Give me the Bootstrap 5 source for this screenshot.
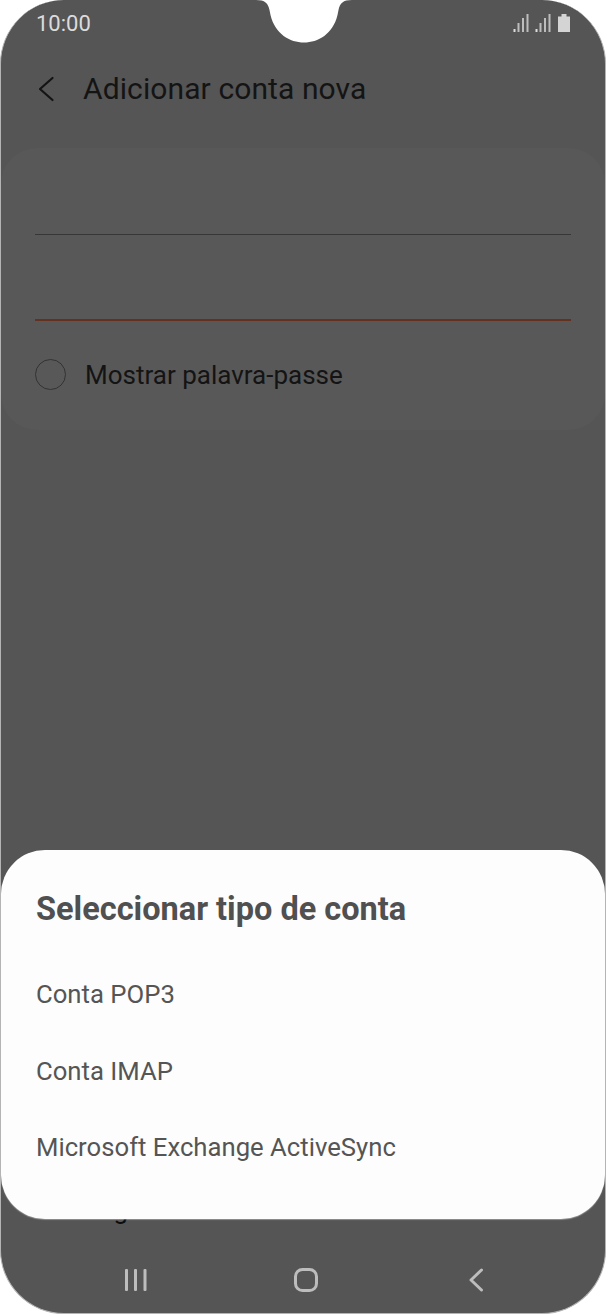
<!doctype html>
<html lang="pt">
<head>
<meta charset="utf-8">
<link href="https://cdn.jsdelivr.net/npm/bootstrap@5.3.0/dist/css/bootstrap.min.css" rel="stylesheet">
<style>
html,body{margin:0;background:#fff;width:606px;height:1314px;overflow:hidden}
body{font-family:Roboto,"Liberation Sans",sans-serif}
.phone-shell{width:606px;height:1314px;background:#555;border-radius:64px;border:1px solid #b4b4b4;border-width:0 1px 1px 1px;overflow:hidden;position:relative}
.notch{position:absolute;left:255px;top:0;width:96px;height:45px;overflow:visible}
.status-row{height:48px;padding:0 34px 0 35px;color:#dcdcdc;font-size:22px}
.time-txt{line-height:50px}
.head-row{height:82px;padding-left:36px;gap:28px;color:#111}
.head-title{font-size:30px;line-height:34px;letter-spacing:.1px;color:#141414;margin-bottom:0;font-weight:400}
.form-panel{margin:18px 0 0;height:282px;background:#585858;border-radius:36px;padding:86px 34px 0}
.field-line{height:1px;background:#373737}
.field-line-active{height:2px;background:#64301f;margin-top:84px}
.check-row{margin-top:38px;gap:19px;font-size:26px;color:#141414;line-height:30px}
.check-dot{width:31px;height:31px;border-radius:50%;border:1px solid #333;flex:none}
.hidden-row{position:absolute;left:52px;top:1195px;font-size:26px;line-height:30px;color:#0c0c0c}
.sheet{position:absolute;left:0;right:0;top:850px;height:369px;background:#fdfdfd;border-radius:44px;padding:41px 35px 0;box-shadow:0 1px 1px rgba(255,255,255,.35)}
.sheet-title{font-size:32.5px;font-weight:700;color:#505050;line-height:36px;margin:0 0 46px}
.sheet-list{margin:0;padding:0;list-style:none}
.sheet-list li{font-size:25.7px;color:#555;height:76.5px;line-height:30px;padding-top:6px}
.nav-row{position:absolute;left:50px;bottom:0;height:66px}
.nav-cell{width:170px}
</style>
</head>
<body>
<div class="phone-shell">
  <svg class="notch" viewBox="0 0 96 45"><path d="M0 0H96C87 0 84 3 82.500 10L81.500 15C77 34 62 42.500 48 42.500C34 42.500 19 34 14.500 15L13.500 10C12 3 9 0 0 0Z" fill="#fff"/></svg>

  <div class="status-row d-flex justify-content-between align-items-center">
    <span class="time-txt">10:00</span>
    <svg width="58" height="20" viewBox="0 0 58 20" fill="#bdbdbd" aria-hidden="true">
      <rect x=".5" y="15" width="2" height="3" fill="#ddd"/><rect x="4.500" y="9" width="2" height="9"/><rect x="9" y="4" width="2" height="14"/><rect x="13.500" y="0" width="2" height="18"/>
      <rect x="22.500" y="15" width="2" height="3" fill="#ddd"/><rect x="26.500" y="9" width="2" height="9"/><rect x="31" y="4" width="2" height="14"/><rect x="35.500" y="0" width="2" height="18"/>
      <path d="M45 2.500h3.500V0h5v2.500H57V18H45z" fill="#d4d4d4"/>
    </svg>
  </div>

  <div class="head-row d-flex align-items-center">
    <svg width="18" height="26" viewBox="0 0 18 26" fill="none" stroke="#141414" stroke-width="2.200" stroke-linecap="round" stroke-linejoin="round" aria-hidden="true"><path d="M15.500 2 3 13l12.500 11"/></svg>
    <h1 class="head-title">Adicionar conta nova</h1>
  </div>

  <div class="form-panel">
    <div class="field-line"></div>
    <div class="field-line-active"></div>
    <div class="check-row d-flex align-items-center"><span class="check-dot"></span><span>Mostrar palavra-passe</span></div>
  </div>

  <div class="hidden-row">Config</div>

  <div class="sheet">
    <h2 class="sheet-title">Seleccionar tipo de conta</h2>
    <ul class="sheet-list">
      <li>Conta POP3</li>
      <li>Conta IMAP</li>
      <li>Microsoft Exchange ActiveSync</li>
    </ul>
  </div>

  <div class="nav-row d-flex">
    <div class="nav-cell d-flex justify-content-center align-items-center">
      <svg width="22" height="22" viewBox="0 0 22 22" fill="#bdbdbd" aria-hidden="true"><rect x="0" y="0" width="3" height="22" rx="1"/><rect x="9" y="0" width="3" height="22" rx="1"/><rect x="18.500" y="0" width="3" height="22" rx="1"/></svg>
    </div>
    <div class="nav-cell d-flex justify-content-center align-items-center">
      <svg width="24" height="24" viewBox="0 0 24 24" fill="none" stroke="#bdbdbd" stroke-width="3" aria-hidden="true"><rect x="1.500" y="1.500" width="21" height="21" rx="7"/></svg>
    </div>
    <div class="nav-cell d-flex justify-content-center align-items-center">
      <svg width="16" height="24" viewBox="0 0 16 24" fill="none" stroke="#bdbdbd" stroke-width="3" stroke-linecap="round" stroke-linejoin="round" aria-hidden="true"><path d="M13.500 2 3 12l10.500 10"/></svg>
    </div>
  </div>
</div>
<script src="https://cdn.jsdelivr.net/npm/bootstrap@5.3.0/dist/js/bootstrap.bundle.min.js"></script>
</body>
</html>
